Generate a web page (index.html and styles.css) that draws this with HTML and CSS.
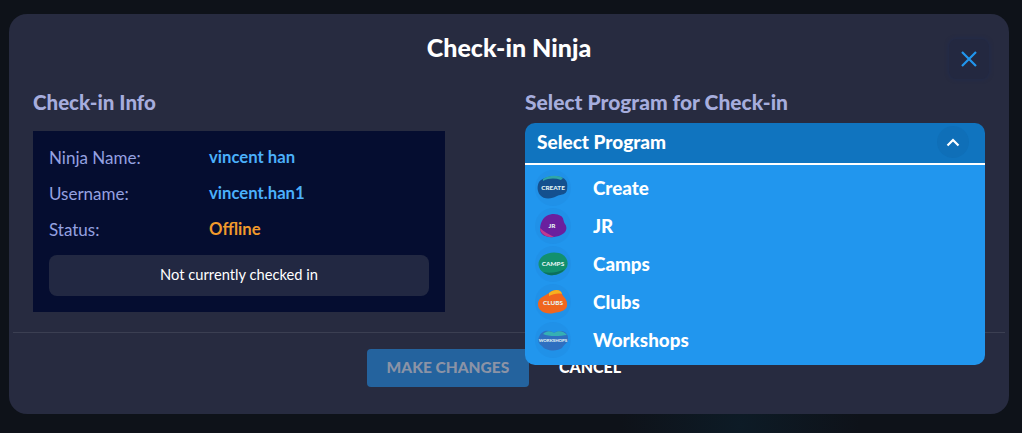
FILE: index.html
```html
<!DOCTYPE html>
<html>
<head>
    <title>Check-in Ninja</title>
    <link rel="stylesheet" href="styles.css">
</head>
<body>
    <div class="modal">
        <div class="modal-head">
            <h1>Check-in Ninja</h1>
            <button class="close-btn" aria-label="Close">
                <svg width="18" height="18" viewBox="0 0 18 18"><path d="M2 2L16 16M16 2L2 16" stroke="#2196ee" stroke-width="2.2" fill="none"/></svg>
            </button>
        </div>

        <div class="modal-body">
            <div class="info-col">
                <h2>Check-in Info</h2>
                <div class="info-box">
                    <div class="info-row"><span class="label">Ninja Name:</span><span class="value">vincent han</span></div>
                    <div class="info-row"><span class="label">Username:</span><span class="value">vincent.han1</span></div>
                    <div class="info-row"><span class="label">Status:</span><span class="value offline">Offline</span></div>
                    <div class="status-note">Not currently checked in</div>
                </div>
            </div>

            <div class="program-col">
                <h2>Select Program for Check-in</h2>
                <div class="select">
                    <div class="select-head">
                        <span class="select-title">Select Program</span>
                        <span class="chevron">
                            <svg width="14" height="9" viewBox="0 0 14 9"><path d="M1.5 7.5L7 2L12.5 7.5" stroke="#fff" stroke-width="2.2" fill="none"/></svg>
                        </span>
                    </div>
                    <ul class="select-menu">
                        <li>
                            <svg class="logo" viewBox="-2 -5 36 36"><path d="M2 7C7 1 20 0 26 3C30 5 31 9 30 15C29 20 25 19 20 21C15 24 7 25 3 20C0 16 0 11 2 7Z" fill="#14508f"/><path d="M6 4C12 0 21 0 26 3L24 5C18 3 12 3 6 6Z" fill="#2fa6a8"/><text x="16" y="15" class="logo-text">CREATE</text></svg>
                            <span class="item-name">Create</span>
                        </li>
                        <li>
                            <svg class="logo" viewBox="-2 -5 36 36"><path d="M5 8C8 1 18 -1 24 3C27 5 26 8 28 11C31 15 29 20 24 22C18 25 9 25 5 21C2 18 3 12 5 8Z" fill="#6a1f9e"/><path d="M3 15C3 21 10 25 17 24C12 21 7 19 3 15Z" fill="#c23a8e"/><text x="15" y="15" class="logo-text">JR</text></svg>
                            <span class="item-name">JR</span>
                        </li>
                        <li>
                            <svg class="logo" viewBox="-2 -5 36 36"><path d="M2 10C5 3 14 0 22 2C29 4 32 10 30 16C27 22 19 25 12 24C4 22 0 16 2 10Z" fill="#12906e"/><path d="M6 21C12 26 22 25 28 18C22 21 13 23 6 21Z" fill="#0b6f5d"/><text x="16" y="14.5" class="logo-text">CAMPS</text></svg>
                            <span class="item-name">Camps</span>
                        </li>
                        <li>
                            <svg class="logo" viewBox="-2 -5 36 36"><path d="M1 14C2 8 8 7 12 4C17 0 24 0 25 5C26 8 31 10 30 17C29 22 22 23 17 24C9 26 0 22 1 14Z" fill="#f0661e"/><path d="M12 4C17 0 24 0 25 5C21 4 16 5 12 7Z" fill="#f7b11f"/><text x="16" y="16" class="logo-text">CLUBS</text></svg>
                            <span class="item-name">Clubs</span>
                        </li>
                        <li>
                            <svg class="logo" viewBox="-2 -5 36 36"><path d="M2 10C5 2 13 3 17 6C21 3 30 3 31 10C32 16 27 17 25 21C20 25 8 24 5 19C2 17 0 14 2 10Z" fill="#2f6fc0"/><path d="M6 7C10 3 14 4 17 6C21 3 27 4 30 8C24 9 12 10 6 7Z" fill="#35b0b4"/><text x="16" y="14.5" class="logo-text small">WORKSHOPS</text></svg>
                            <span class="item-name">Workshops</span>
                        </li>
                    </ul>
                </div>
            </div>
        </div>

        <div class="modal-foot">
            <button class="btn-primary" disabled>MAKE CHANGES</button>
            <button class="btn-link">CANCEL</button>
        </div>
    </div>
</body>
</html>
```
FILE: styles.css
```css
* {
    box-sizing: border-box;
    margin: 0;
    padding: 0;
    list-style: none;
}

html, body {
    height: 433px;
    overflow: hidden;
}

body {
    padding: 14px 13px 19px 9px;
    background: radial-gradient(circle at 740px 425px, #0d1b26 0, #0e1219 120px);
    font-family: "Lato", "Liberation Sans", sans-serif;
}

.modal {
    position: relative;
    display: flex;
    flex-direction: column;
    width: 1000px;
    height: 400px;
    background-color: #272b40;
    border-radius: 18px;
}

.modal-head {
    height: 71px;
    padding-top: 17px;
    text-align: center;
}

.modal-head h1 {
    font-size: 25px;
    line-height: 32px;
    font-weight: 900;
    color: #fff;
}

.close-btn {
    position: absolute;
    top: 25px;
    right: 20px;
    display: flex;
    align-items: center;
    justify-content: center;
    width: 40px;
    height: 40px;
    border: 0;
    border-radius: 8px;
    background-color: #232840;
    box-shadow: 0 0 4px #1f2a4e;
}

.modal-body {
    display: grid;
    grid-template-columns: 412px 460px;
    column-gap: 80px;
    height: 247px;
    padding-left: 24px;
}

h2 {
    line-height: 26px;
    font-weight: 900;
    color: #a6addd;
}

.info-col h2 {
    margin-top: 4px;
    margin-bottom: 16px;
    font-size: 20.5px;
}

.program-col h2 {
    margin-top: 4px;
    margin-bottom: 8px;
    font-size: 21px;
}

.info-box {
    height: 181px;
    padding: 8px 16px 0;
    background-color: #050d30;
}

.info-row {
    display: flex;
    height: 36px;
    align-items: center;
    font-size: 17px;
}

.label {
    width: 160px;
    color: #95a1e0;
}

.value {
    font-size: 16.7px;
    font-weight: 700;
    color: #4bb0fb;
}

.value.offline {
    color: #f19a2c;
}

.status-note {
    height: 41px;
    margin-top: 8px;
    border-radius: 8px;
    background-color: #222842;
    font-size: 14.7px;
    line-height: 38px;
    text-align: center;
    color: #fff;
}

.select {
    position: relative;
    z-index: 2;
}

.select-head {
    display: flex;
    align-items: center;
    justify-content: space-between;
    height: 42px;
    padding: 0 16px 2px 12px;
    border-bottom: 2px solid #fff;
    border-radius: 10px 10px 0 0;
    background-color: #1074bf;
    font-size: 19px;
    font-weight: 900;
    color: #fff;
}

.select-title {
    margin-bottom: 2px;
}

.chevron {
    display: flex;
    align-items: center;
    justify-content: center;
    width: 32px;
    height: 32px;
    border-radius: 50%;
    background-color: #0f6fb8;
}

.select-menu {
    height: 200px;
    padding-top: 4px;
    border-radius: 0 0 10px 10px;
    background-color: #2196ee;
}

.select-menu li {
    display: flex;
    align-items: center;
    height: 38px;
    padding-left: 10px;
    font-size: 18.8px;
    font-weight: 900;
    color: #fff;
}

.item-name {
    margin-bottom: 2px;
}

.logo {
    width: 36px;
    height: 36px;
    margin-right: 22px;
    border-radius: 50%;
    background-color: #2091e8;
}

.logo-text {
    font-size: 6.4px;
    font-weight: 900;
    fill: #e4f4f4;
    text-anchor: middle;
}

.logo-text.small {
    font-size: 4.4px;
}

.modal-foot {
    display: flex;
    justify-content: center;
    align-items: flex-start;
    gap: 30px;
    flex: 1;
    margin-left: 4px;
    margin-right: 4px;
    padding-top: 16px;
    padding-right: 30px;
    border-top: 1px solid #3b3f52;
}

.btn-primary {
    width: 162px;
    height: 38px;
    padding-bottom: 3px;
    border: 0;
    border-radius: 4px;
    background-color: #24639e;
    font-family: inherit;
    font-size: 15.5px;
    font-weight: 900;
    color: #8b93a6;
}

.btn-link {
    height: 38px;
    padding-bottom: 3px;
    border: 0;
    background: none;
    font-family: inherit;
    font-size: 16px;
    font-weight: 900;
    color: #fff;
}
```
